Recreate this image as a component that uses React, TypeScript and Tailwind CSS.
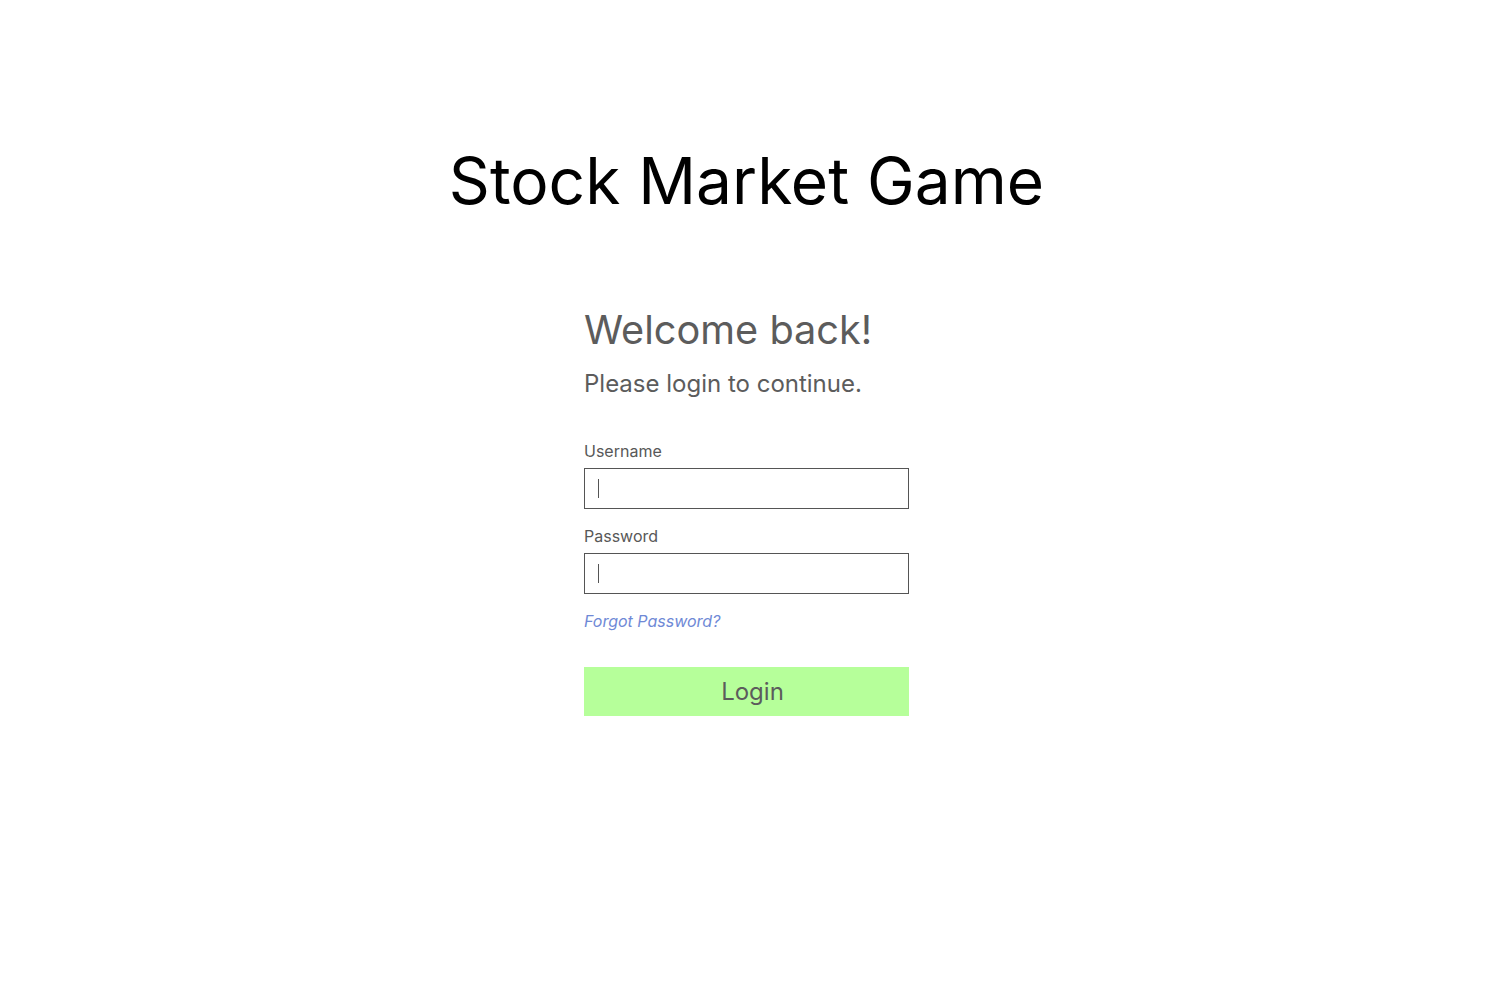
export default function App() {
  return (
    <div className="min-h-screen bg-white pr-[19px] font-['Inter',sans-serif]">
      <div className="flex flex-col items-center">
        <h1 className="mt-[142px] text-[64px] leading-[78px] text-black">Stock Market Game</h1>

        <div className="mt-[86px] w-[325px]">
          <h2 className="text-[39.7px] leading-[48px] text-[#5c5c5c]">Welcome back!</h2>
          <p className="mt-[15px] text-[24px] leading-[29px] text-[#5c5c5c]">Please login to continue.</p>

          <form className="mt-[44px] flex flex-col" onSubmit={(e) => e.preventDefault()}>
            <label className="text-[16px] leading-[19px] text-[#585858]">Username</label>
            <div className="relative mt-[7px] h-[41px] border border-[#555]">
              <span className="absolute left-[13px] top-[10px] h-[19px] w-px bg-[#555]" />
            </div>

            <label className="mt-[18px] text-[16px] leading-[19px] text-[#585858]">Password</label>
            <div className="relative mt-[7px] h-[41px] border border-[#555]">
              <span className="absolute left-[13px] top-[10px] h-[19px] w-px bg-[#555]" />
            </div>

            <a href="#" className="mt-[18px] text-[16px] leading-[19px] italic text-[#6f89d6]">Forgot Password?</a>

            <button type="submit" className="mt-[36px] h-[49px] w-full bg-[#b6ff9a] pl-[12px] text-[24px] text-[#5c5c5c]">
              Login
            </button>
          </form>
        </div>
      </div>
    </div>
  )
}
